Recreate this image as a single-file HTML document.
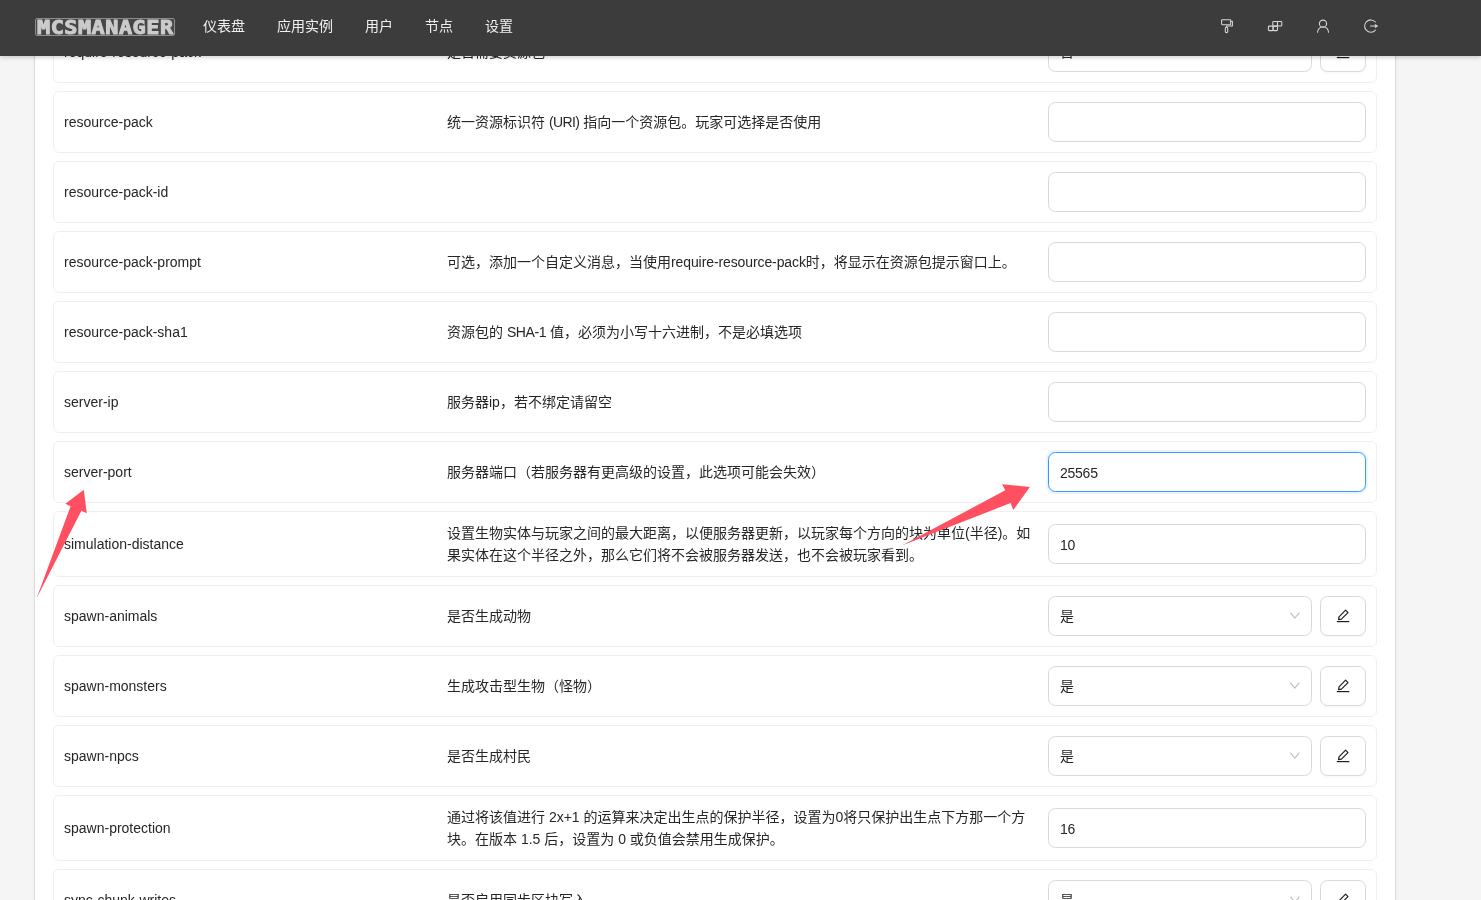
<!DOCTYPE html>
<html lang="zh-CN">
<head>
<meta charset="utf-8">
<title>MCSManager</title>
<style>
*{box-sizing:border-box;}
html,body{margin:0;padding:0;}
body{width:1481px;height:900px;overflow:hidden;background:#f5f5f5;position:relative;
  font-family:"Liberation Sans","Noto Sans CJK SC",sans-serif;font-size:14px;color:#262626;}
.header{will-change:transform;position:absolute;left:0;top:0;width:1481px;height:56px;background:#3c3c3c;z-index:10;
  box-shadow:0 2px 4px rgba(0,0,0,.16);}
.logo{position:absolute;left:35px;top:18px;width:140px;height:18px;border:1px solid #8d8d8d;border-radius:2px;background:#474747;overflow:hidden;}
.logo span{position:absolute;left:1px;top:-3px;display:block;line-height:24px;height:24px;white-space:nowrap;
  font-family:"DejaVu Sans Mono","Liberation Mono",monospace;font-weight:bold;font-size:19.5px;letter-spacing:0.45px;
  color:#cbcbcb;-webkit-text-stroke:1px #cbcbcb;transform:scaleX(1.12);transform-origin:0 50%;}
.nav{position:absolute;top:0;height:55px;line-height:52px;color:#f0f0f0;font-size:14px;white-space:nowrap;}
.hicons{position:absolute;left:0;top:0;}
.card{position:absolute;left:35px;top:-20px;width:1360px;height:960px;background:#fff;box-shadow:0 0 0 1px rgba(0,0,0,.075),0 0 3px rgba(0,0,0,.10);}
.row{will-change:transform;position:absolute;left:53px;width:1324px;border:1px solid #efefef;border-radius:6px;background:#fff;}
.name{position:absolute;left:10px;top:0;height:100%;display:flex;align-items:center;white-space:nowrap;}
.desc{position:absolute;left:393px;top:0;width:590px;height:100%;display:flex;align-items:center;line-height:22px;}
.inp{letter-spacing:-0.25px;position:absolute;left:994px;width:318px;height:40px;border:1px solid #d9d9d9;border-radius:7.5px;background:#fff;
  padding:0 11px;line-height:40px;}
.inp.focus{border-color:#4096ff;box-shadow:0 0 0 2px rgba(5,145,255,.1);}
.sel{position:absolute;left:994px;width:264px;height:40px;border:1px solid #d9d9d9;border-radius:7.5px;background:#fff;
  padding:0 11px;line-height:38px;}
.sel svg{position:absolute;right:11px;top:11px;overflow:visible;}
.btn{position:absolute;left:1266px;width:46px;height:40px;border:1px solid #d9d9d9;border-radius:7.5px;background:#fff;
  box-shadow:0 2px 0 rgba(0,0,0,.02);}
.btn svg{position:absolute;left:14px;top:11px;}
.arrows{position:absolute;left:0;top:0;z-index:5;pointer-events:none;}
</style>
</head>
<body>
<div class="card"></div>

<!-- rows -->
<div class="row" style="top:21px;height:62px;">
  <div class="name">require-resource-pack</div>
  <div class="desc"><div>是否需要资源包</div></div>
  <div class="sel" style="top:10px;">否<svg width="12" height="12" viewBox="0 0 12 12"><path d="M2.3 4.7 L6.85 10.2 L11.4 4.7" fill="none" stroke="#bdbdbd" stroke-width="1.1"/></svg></div>
  <div class="btn" style="top:10px;"><svg width="16" height="16" viewBox="0 0 16 16"><path d="M10.6 2.2 L13 4.6 L6.4 11.2 L3.6 11.6 L4 8.8 Z" fill="none" stroke="#1f1f1f" stroke-width="1.2" stroke-linejoin="round"/><path d="M1.8 13.6 H14.3" stroke="#1f1f1f" stroke-width="1.2"/></svg></div>
</div>

<div class="row" style="top:91px;height:62px;">
  <div class="name">resource-pack</div>
  <div class="desc"><div>统一资源标识符 <span style="letter-spacing:-0.6px">(URI)</span> 指向一个资源包。玩家可选择是否使用</div></div>
  <div class="inp" style="top:10px;"></div>
</div>

<div class="row" style="top:161px;height:62px;">
  <div class="name">resource-pack-id</div>
  <div class="desc"><div></div></div>
  <div class="inp" style="top:10px;"></div>
</div>

<div class="row" style="top:231px;height:62px;">
  <div class="name">resource-pack-prompt</div>
  <div class="desc"><div>可选，添加一个自定义消息，当使用<span style="letter-spacing:-0.1px">require-resource-pack</span>时，将显示在资源包提示窗口上。</div></div>
  <div class="inp" style="top:10px;"></div>
</div>

<div class="row" style="top:301px;height:62px;">
  <div class="name">resource-pack-sha1</div>
  <div class="desc"><div>资源包的 <span style="letter-spacing:-0.4px">SHA-1</span> 值，必须为小写十六进制，不是必填选项</div></div>
  <div class="inp" style="top:10px;"></div>
</div>

<div class="row" style="top:371px;height:62px;">
  <div class="name">server-ip</div>
  <div class="desc"><div>服务器ip，若不绑定请留空</div></div>
  <div class="inp" style="top:10px;"></div>
</div>

<div class="row" style="top:441px;height:62px;">
  <div class="name">server-port</div>
  <div class="desc"><div>服务器端口（若服务器有更高级的设置，此选项可能会失效）</div></div>
  <div class="inp focus" style="top:10px;">25565</div>
</div>

<div class="row" style="top:511px;height:66px;">
  <div class="name">simulation-distance</div>
  <div class="desc"><div>设置生物实体与玩家之间的最大距离，以便服务器更新，以玩家每个方向的块为单位(半径)。如果实体在这个半径之外，那么它们将不会被服务器发送，也不会被玩家看到。</div></div>
  <div class="inp" style="top:12px;">10</div>
</div>

<div class="row" style="top:585px;height:62px;">
  <div class="name">spawn-animals</div>
  <div class="desc"><div>是否生成动物</div></div>
  <div class="sel" style="top:10px;">是<svg width="12" height="12" viewBox="0 0 12 12"><path d="M2.3 4.7 L6.85 10.2 L11.4 4.7" fill="none" stroke="#bdbdbd" stroke-width="1.1"/></svg></div>
  <div class="btn" style="top:10px;"><svg width="16" height="16" viewBox="0 0 16 16"><path d="M10.6 2.2 L13 4.6 L6.4 11.2 L3.6 11.6 L4 8.8 Z" fill="none" stroke="#1f1f1f" stroke-width="1.2" stroke-linejoin="round"/><path d="M1.8 13.6 H14.3" stroke="#1f1f1f" stroke-width="1.2"/></svg></div>
</div>

<div class="row" style="top:655px;height:62px;">
  <div class="name">spawn-monsters</div>
  <div class="desc"><div>生成攻击型生物（怪物）</div></div>
  <div class="sel" style="top:10px;">是<svg width="12" height="12" viewBox="0 0 12 12"><path d="M2.3 4.7 L6.85 10.2 L11.4 4.7" fill="none" stroke="#bdbdbd" stroke-width="1.1"/></svg></div>
  <div class="btn" style="top:10px;"><svg width="16" height="16" viewBox="0 0 16 16"><path d="M10.6 2.2 L13 4.6 L6.4 11.2 L3.6 11.6 L4 8.8 Z" fill="none" stroke="#1f1f1f" stroke-width="1.2" stroke-linejoin="round"/><path d="M1.8 13.6 H14.3" stroke="#1f1f1f" stroke-width="1.2"/></svg></div>
</div>

<div class="row" style="top:725px;height:62px;">
  <div class="name">spawn-npcs</div>
  <div class="desc"><div>是否生成村民</div></div>
  <div class="sel" style="top:10px;">是<svg width="12" height="12" viewBox="0 0 12 12"><path d="M2.3 4.7 L6.85 10.2 L11.4 4.7" fill="none" stroke="#bdbdbd" stroke-width="1.1"/></svg></div>
  <div class="btn" style="top:10px;"><svg width="16" height="16" viewBox="0 0 16 16"><path d="M10.6 2.2 L13 4.6 L6.4 11.2 L3.6 11.6 L4 8.8 Z" fill="none" stroke="#1f1f1f" stroke-width="1.2" stroke-linejoin="round"/><path d="M1.8 13.6 H14.3" stroke="#1f1f1f" stroke-width="1.2"/></svg></div>
</div>

<div class="row" style="top:795px;height:66px;">
  <div class="name">spawn-protection</div>
  <div class="desc"><div>通过将该值进行 2x+1 的运算来决定出生点的保护半径，设置为0将只保护出生点下方那一个方块。在版本 1.5 后，设置为 0 或负值会禁用生成保护。</div></div>
  <div class="inp" style="top:12px;">16</div>
</div>

<div class="row" style="top:869px;height:62px;">
  <div class="name">sync-chunk-writes</div>
  <div class="desc"><div>是否启用同步区块写入</div></div>
  <div class="sel" style="top:10px;">是<svg width="12" height="12" viewBox="0 0 12 12"><path d="M2.3 4.7 L6.85 10.2 L11.4 4.7" fill="none" stroke="#bdbdbd" stroke-width="1.1"/></svg></div>
  <div class="btn" style="top:10px;"><svg width="16" height="16" viewBox="0 0 16 16"><path d="M10.6 2.2 L13 4.6 L6.4 11.2 L3.6 11.6 L4 8.8 Z" fill="none" stroke="#1f1f1f" stroke-width="1.2" stroke-linejoin="round"/><path d="M1.8 13.6 H14.3" stroke="#1f1f1f" stroke-width="1.2"/></svg></div>
</div>

<!-- red annotation arrows -->
<svg class="arrows" width="1481" height="900" viewBox="0 0 1481 900">
  <polygon points="36.6,598.3 70.6,506.2 65.4,503.7 83.8,489.8 86.8,513.2 81.4,510.8" fill="#ff5062"/>
  <polygon points="901.9,545.6 1005.3,490.2 1002.1,484.2 1029.9,487 1013.3,509.9 1010.6,503.0" fill="#ff5062"/>
</svg>

<!-- header -->
<div class="header">
  <div class="logo"><span>MCSMANAGER</span></div>
  <svg class="hicons" width="1481" height="55" viewBox="0 0 1481 55" fill="none" stroke="#d8d8d8" stroke-width="1.05" stroke-linecap="round" stroke-linejoin="round">
    <!-- paint roller -->
    <rect x="1221.6" y="19.7" width="9" height="5" rx="0.6"/>
    <path d="M1230.6 21.2 H1232.4 V25.9 H1226.5 V27"/>
    <rect x="1225.3" y="27" width="2.4" height="5.6" rx="1.2"/>
    <!-- blocks -->
    <rect x="1272.8" y="21.4" width="4.7" height="4.7" rx="0.8"/>
    <rect x="1277.5" y="21.4" width="4.3" height="4.7" rx="0.8"/>
    <rect x="1268.4" y="26.1" width="4.7" height="4.5" rx="0.8"/>
    <rect x="1273.1" y="26.1" width="4.4" height="4.5" rx="0.8"/>
    <!-- user -->
    <circle cx="1323" cy="23.7" r="3.6"/>
    <path d="M1317.6 32.3 A5.45 5.45 0 0 1 1328.5 32.3"/>
    <!-- logout -->
    <path d="M1375.4 22 A6.15 6.15 0 1 0 1375.4 30.1"/>
    <path d="M1370.5 26.05 H1376"/>
    <path d="M1375.6 24.7 L1377.6 26.05 L1375.6 27.4 Z" fill="#d8d8d8" stroke-width="0.8"/>
  </svg>
  <div class="nav" style="left:203px;">仪表盘</div>
  <div class="nav" style="left:277px;">应用实例</div>
  <div class="nav" style="left:365px;">用户</div>
  <div class="nav" style="left:425px;">节点</div>
  <div class="nav" style="left:485px;">设置</div>
</div>
</body>
</html>
